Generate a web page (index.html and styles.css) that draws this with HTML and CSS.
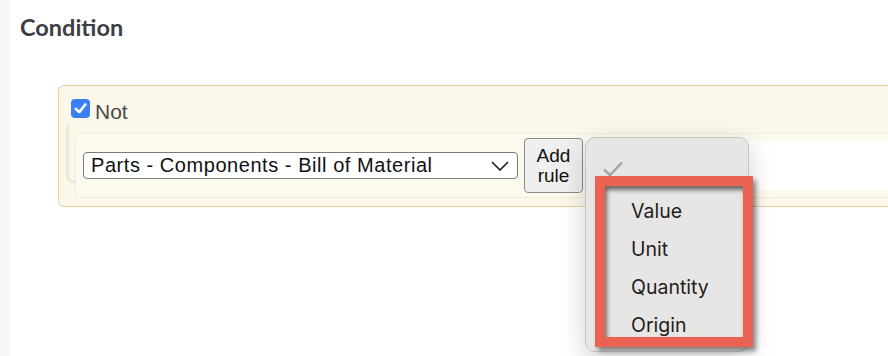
FILE: index.html
```html
<!DOCTYPE html>
<html lang="en">

<head>
    <meta charset="UTF-8">
    <meta name="viewport" content="width=device-width, initial-scale=1.0">
    <title>Condition</title>
    <link rel="stylesheet" href="styles.css">
</head>

<body>
    <div class="page">
        <aside class="sidebar"></aside>

        <main class="content">
            <h2 class="title">Condition</h2>

            <div class="condition">
                <label class="not-toggle">
                    <span class="checkbox">
                        <svg width="19" height="19" viewBox="0 0 19 19">
                            <rect width="19" height="19" rx="4" fill="#3b7ff6"/>
                            <path d="M4.8 9.8 L8.2 13.2 L14.4 5.4" fill="none" stroke="#fff" stroke-width="2.6" stroke-linecap="round" stroke-linejoin="round"/>
                        </svg>
                    </span>
                    Not
                </label>

                <div class="rules">
                    <div class="rule">
                        <div class="field-select">
                            <span>Parts - Components - Bill of Material</span>
                            <svg width="18" height="10" viewBox="0 0 18 10">
                                <polyline points="1,1 9,9 17,1" fill="none" stroke="#1c1c1c" stroke-width="1.6"/>
                            </svg>
                        </div>

                        <button class="add-rule">Add<br>rule</button>

                        <div class="value-select">
                            <!-- open native menu -->
                            <div class="menu">
                                <svg class="menu-check" width="22" height="16" viewBox="0 0 22 16">
                                    <path d="M2 8.5 L8 14 L20 1.5" fill="none" stroke="#a3a3a3" stroke-width="2.4"/>
                                </svg>
                                <ul class="menu-items">
                                    <li>Value</li>
                                    <li>Unit</li>
                                    <li>Quantity</li>
                                    <li>Origin</li>
                                </ul>
                                <div class="highlight"></div>
                            </div>
                        </div>
                    </div>
                </div>
            </div>
        </main>
    </div>
</body>

</html>
```

FILE: styles.css
```css
html,
body {
    margin: 0;
    height: 100%;
    overflow: hidden;
    background-color: #fff;
}

.page {
    display: flex;
    width: 888px;
    height: 356px;
    overflow: hidden;
}

.sidebar {
    width: 10px;
    flex-shrink: 0;
    background-color: #f6f6f6;
}

.content {
    flex: 1;
    padding: 12px 0 0 10px;
}

.title {
    margin: 0;
    font-family: Lato, "Open Sans", sans-serif;
    font-weight: 700;
    font-size: 23.5px;
    line-height: 30px;
    color: #3c4044;
}

.condition {
    width: 1000px;
    margin: 43px 0 0 38px;
    padding: 13px 0 8px 7px;
    background-color: #fbf7e9;
    border: 1px solid #e2cf9f;
    border-radius: 6px;
    font-family: "Liberation Sans", Arial, sans-serif;
}

.not-toggle {
    display: flex;
    align-items: flex-start;
    gap: 5px;
    margin-left: 5px;
    font-size: 21px;
    line-height: 25px;
    color: #4a4a4a;
}

.checkbox {
    display: block;
    height: 19px;
}

.checkbox svg {
    display: block;
}

.rules {
    position: relative;
    padding: 9px 0 0 9px;
}

/* tree connector */
.rules::before {
    content: "";
    position: absolute;
    left: 0;
    top: 0;
    width: 8px;
    height: 56px;
    border-left: 3px solid #eee8d5;
    border-bottom: 3px solid #eee8d5;
    border-bottom-left-radius: 7px;
}

.rule {
    position: relative;
    display: flex;
    align-items: center;
    gap: 6px;
    height: 65px;
    box-sizing: border-box;
    padding: 0 7px;
    background-color: #fcf9ef;
    border: 1px solid #f1ebd8;
    border-radius: 5px;
}

.field-select {
    display: flex;
    align-items: center;
    justify-content: space-between;
    width: 435px;
    height: 27px;
    box-sizing: border-box;
    padding: 0 8px 0 7px;
    background-color: #fff;
    border: 1px solid #7a7a7a;
    border-radius: 4px;
    font-size: 20px;
    letter-spacing: 0.55px;
    color: #111;
}

.field-select svg {
    display: block;
}

.add-rule {
    width: 59px;
    height: 55px;
    padding: 0;
    background-color: #efefef;
    border: 1px solid #8a8a8a;
    border-radius: 4px;
    font-family: "Liberation Sans", Arial, sans-serif;
    font-size: 19px;
    line-height: 20px;
    color: #111;
}

.value-select {
    position: relative;
    flex: 1;
    height: 49px;
    margin-left: 1px;
    background-color: #fff;
}

.menu {
    position: absolute;
    left: -5px;
    top: -4px;
    width: 164px;
    height: 215px;
    box-sizing: border-box;
    padding: 23px 0 0 16px;
    background-color: #e8e6e4;
    border: 1px solid #c4c4c4;
    border-radius: 10px;
    box-shadow: 0 8px 26px rgba(0, 0, 0, 0.18);
    z-index: 2;
}

.menu-check {
    display: block;
    margin-bottom: 15px;
}

.menu-items {
    list-style: none;
    margin: 0;
    padding: 0 0 0 29px;
    font-family: Inter, "Noto Sans", sans-serif;
    font-size: 19.5px;
    line-height: 38px;
    color: #1e1e1e;
}

/* screenshot annotation */
.highlight {
    position: absolute;
    left: 9px;
    top: 38px;
    width: 158px;
    height: 171px;
    box-sizing: border-box;
    border: 10px solid #ea6352;
    box-shadow: 3px 4px 5px rgba(0, 0, 0, 0.45), inset 2px 4px 4px rgba(0, 0, 0, 0.55);
}
```
